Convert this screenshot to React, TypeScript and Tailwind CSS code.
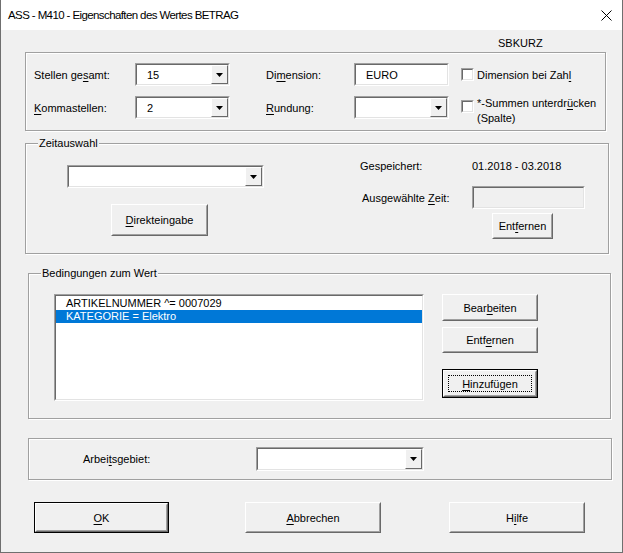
import type { ReactNode } from 'react';

// Win32 style property dialog: "Eigenschaften des Wertes"

function M({ children }: { children: ReactNode }) {
  return <span className="underline underline-offset-[2px] decoration-1">{children}</span>;
}

function Sunken({ className = '', children }: { className?: string; children?: ReactNode }) {
  return (
    <div className={`border border-t-[#a0a0a0] border-l-[#a0a0a0] border-b-white border-r-white ${className}`}>
      <div className="h-full w-full border border-t-[#696969] border-l-[#696969] border-b-[#e3e3e3] border-r-[#e3e3e3] bg-white flex items-center">
        {children}
      </div>
    </div>
  );
}

function DropButton() {
  return (
    <div className="h-full w-[17px] border border-t-white border-l-white border-b-[#696969] border-r-[#696969] bg-[#f0f0f0] flex items-center justify-center">
      <svg width="7" height="4" viewBox="0 0 7 4">
        <path d="M0 0h7L3.5 4z" fill="#000" />
      </svg>
    </div>
  );
}

function Combo({ className = '', value }: { className?: string; value?: string }) {
  return (
    <Sunken className={className}>
      <span className="flex-1 pl-[10px]">{value}</span>
      <DropButton />
    </Sunken>
  );
}

function Checkbox({ className = '' }: { className?: string }) {
  return <Sunken className={`w-[13px] h-[13px] shrink-0 ${className}`} />;
}

function Button({
  className = '',
  children,
  isDefault = false,
  focused = false,
}: {
  className?: string;
  children: ReactNode;
  isDefault?: boolean;
  focused?: boolean;
}) {
  const face = (
    <div className="h-full w-full border border-t-white border-l-white border-b-[#696969] border-r-[#696969] bg-[#f0f0f0]">
      <div className="h-full w-full border border-t-[#f0f0f0] border-l-[#f0f0f0] border-b-[#a0a0a0] border-r-[#a0a0a0] flex items-center justify-center">
        {focused ? (
          <div className="w-[calc(100%-6px)] h-[calc(100%-6px)] border border-dotted border-black flex items-center justify-center">
            {children}
          </div>
        ) : (
          children
        )}
      </div>
    </div>
  );
  if (isDefault) {
    return <div className={`border border-black ${className}`}>{face}</div>;
  }
  return <div className={className}>{face}</div>;
}

function Group({
  className = '',
  title,
  children,
}: {
  className?: string;
  title?: string;
  children: ReactNode;
}) {
  return (
    <div className={`relative border border-[#a0a0a0] shadow-[inset_1px_1px_0_#fff,1px_1px_0_#fff] ${className}`}>
      {title ? (
        <span className="absolute left-[12px] top-[-8px] bg-[#f0f0f0] px-[1px] leading-[14px]">{title}</span>
      ) : null}
      {children}
    </div>
  );
}

export default function App() {
  return (
    <div className="w-[623px] h-[553px] bg-[#f0f0f0] border-x border-b border-[#6f6f6f] flex flex-col text-[11px] leading-[14px] text-black font-['Liberation_Sans',Arial,sans-serif]">
      {/* title bar */}
      <div className="h-[30px] bg-white flex items-center shrink-0">
        <span className="pl-[7px] text-[11.5px] tracking-[-0.6px]">ASS - M410 - Eigenschaften des Wertes BETRAG</span>
        <div className="ml-auto mr-[10px] w-[11px] h-[11px]">
          <svg width="11" height="11" viewBox="0 0 11 11">
            <path d="M0.5 0.5l10 10M10.5 0.5l-10 10" stroke="#000" strokeWidth="1" />
          </svg>
        </div>
      </div>

      <div className="h-[22px] pl-[497px] pt-[6px] shrink-0">SBKURZ</div>

      {/* Stellen / Dimension */}
      <Group className="ml-[24px] w-[581px] h-[79px] shrink-0">
        <div className="pl-[8px] pt-[10px] flex flex-col gap-[10px]">
          <div className="flex items-center h-[23px]">
            <span className="w-[101px]">
              Stellen ge<M>s</M>amt:
            </span>
            <Combo className="w-[95px] h-[23px]" value="15" />
            <span className="ml-[36px] w-[88px]">
              Di<M>m</M>ension:
            </span>
            <Sunken className="w-[95px] h-[23px]">
              <span className="pl-[10px]">EURO</span>
            </Sunken>
            <Checkbox className="ml-[12px]" />
            <span className="ml-[3px]">
              Dimension bei Zah<M>l</M>
            </span>
          </div>
          <div className="flex items-start">
            <span className="w-[101px] h-[23px] flex items-center">
              <M>K</M>ommastellen:
            </span>
            <Combo className="w-[95px] h-[23px]" value="2" />
            <span className="ml-[36px] w-[88px] h-[23px] flex items-center">
              <M>R</M>undung:
            </span>
            <Combo className="w-[95px] h-[23px]" />
            <Checkbox className="ml-[12px] mt-[4px]" />
            <span className="ml-[3px] leading-[15px]">
              *-Summen unterdr<M>ü</M>cken
              <br />
              (Spalte)
            </span>
          </div>
        </div>
      </Group>

      {/* Zeitauswahl */}
      <Group title="Zeitauswahl" className="mt-[12px] ml-[24px] w-[584px] h-[111px] shrink-0">
        <div className="flex">
          <div className="w-[238px] pl-[41px] pt-[21px] flex flex-col">
            <Combo className="w-[197px] h-[23px]" />
            <Button className="mt-[16px] ml-[44px] w-[97px] h-[32px]">
              <span>
                <M>D</M>irekteingabe
              </span>
            </Button>
          </div>
          <div className="ml-[96px] pt-[15px] flex flex-col">
            <div className="flex">
              <span className="w-[112px]">Gespeichert:</span>
              <span>01.2018 - 03.2018</span>
            </div>
            <div className="mt-[13px] flex items-center">
              <span className="ml-[2px] w-[110px]">
                Ausgewählte <M>Z</M>eit:
              </span>
              <Sunken className="w-[113px] h-[23px]">
                <span className="w-full h-full bg-[#f0f0f0]" />
              </Sunken>
            </div>
            <Button className="mt-[4px] ml-[132px] w-[61px] h-[26px]">
              <span>
                Ent<M>f</M>ernen
              </span>
            </Button>
          </div>
        </div>
      </Group>

      {/* Bedingungen */}
      <Group title="Bedingungen zum Wert" className="mt-[19px] ml-[27px] w-[583px] h-[146px] shrink-0">
        <div className="flex pl-[25px] pt-[20px]">
          <div className="w-[370px] h-[107px] border border-t-[#a0a0a0] border-l-[#a0a0a0] border-b-white border-r-white">
            <div className="h-full w-full border border-t-[#696969] border-l-[#696969] border-b-[#e3e3e3] border-r-[#e3e3e3] bg-white pt-[1px] flex flex-col">
              <div className="h-[13px] leading-[13px] pl-[10px]">ARTIKELNUMMER ^= 0007029</div>
              <div className="h-[13px] leading-[13px] pl-[10px] bg-[#0078d7] text-white">KATEGORIE = Elektro</div>
            </div>
          </div>
          <div className="ml-[18px] w-[96px] flex flex-col">
            <Button className="w-[96px] h-[27px]">
              <span>
                Bear<M>b</M>eiten
              </span>
            </Button>
            <Button className="mt-[6px] w-[96px] h-[26px]">
              <span>
                Entf<M>e</M>rnen
              </span>
            </Button>
            <Button isDefault focused className="mt-[16px] w-[96px] h-[29px]">
              <span>
                <M>H</M>inzufügen
              </span>
            </Button>
          </div>
        </div>
      </Group>

      {/* Arbeitsgebiet */}
      <Group className="mt-[19px] ml-[27px] w-[584px] h-[42px] shrink-0">
        <div className="h-full flex items-center pl-[54px]">
          <span className="w-[173px]">
            Arbei<M>t</M>sgebiet:
          </span>
          <Combo className="w-[168px] h-[24px]" />
        </div>
      </Group>

      {/* Dialog buttons */}
      <div className="mt-[22px] flex shrink-0">
        <Button isDefault className="ml-[33px] w-[135px] h-[31px]">
          <span>
            <M>O</M>K
          </span>
        </Button>
        <Button className="ml-[76px] w-[136px] h-[31px]">
          <span>
            <M>A</M>bbrechen
          </span>
        </Button>
        <Button className="ml-[68px] w-[136px] h-[31px]">
          <span>
            H<M>i</M>lfe
          </span>
        </Button>
      </div>
    </div>
  );
}
